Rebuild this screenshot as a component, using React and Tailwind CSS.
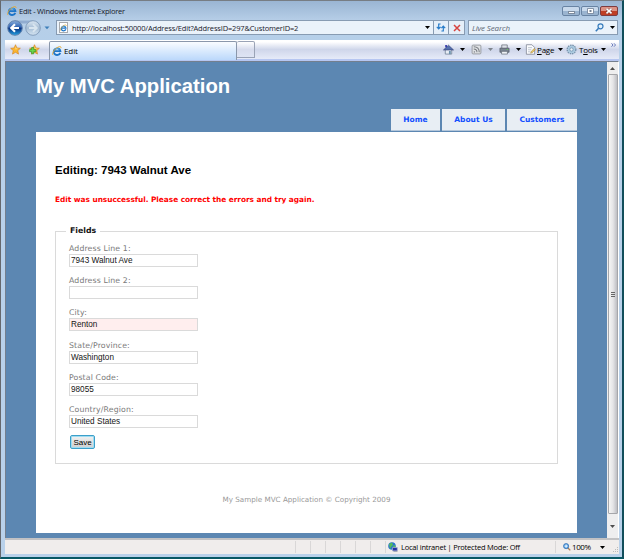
import React from "react";

const ui = "font-['Open_Sans','Noto_Sans',sans-serif]";
const arial = "font-['Liberation_Sans',Arial,sans-serif]";
const verdana = "font-['DejaVu_Sans',Verdana,sans-serif]";

function IeLogo({ className }) {
  return (
    <svg viewBox="0 0 12 12" className={className} fill="none">
      <path d="M9.9 8.2A4 4 0 1 1 10.1 6.2H3.2" stroke="#1d75c9" strokeWidth="2.2" />
      <path d="M9 4.4A3.4 3.4 0 0 0 3.4 4.2" stroke="#62bdf3" strokeWidth="0.9" />
      <path d="M1.3 10.9C-.6 9.2 3.1 3.2 7.3 1.3c2.6-1.2 4-.7 3.3 1.3" stroke="#e9a92b" strokeWidth="1.1" />
    </svg>
  );
}

function Caret({ className = "text-black" }) {
  return (
    <svg viewBox="0 0 5 3" className={`h-[3px] w-[5px] shrink-0 ${className}`}>
      <path d="M0 0h5L2.5 3z" fill="currentColor" />
    </svg>
  );
}

function Star({ className, add }) {
  return (
    <svg viewBox="0 0 12 12" className={className}>
      <path d="M6 .8l1.5 3.5 3.8.4-2.8 2.5.8 3.8L6 9.1 2.7 11l.8-3.8L.7 4.7l3.8-.4z" fill="#fbb630" stroke="#d5831c" strokeWidth=".7" />
      <path d="M6 2.2l.9 2.8 2.3.2-3.2.8z" fill="#ffe38c" />
      {add && <path d="M2.9 3.8h2.3v2.3h2.3v2.3H5.2v2.3H2.9V8.4H.6V6.1h2.3z" fill="#6bd94a" stroke="#2f8f25" strokeWidth=".7" />}
    </svg>
  );
}

function TitleBar() {
  return (
    <div className="flex h-[20px] items-start bg-linear-to-b from-[#9ab5d3] to-[#b7cfe8] pl-[6px]">
      <IeLogo className="mt-[5px] h-[10px] w-[10px]" />
      <span className={`${ui} ml-[2px] mt-[4px] whitespace-nowrap text-[7.5px] leading-[12px] tracking-[-0.22px] text-[#18202c]`}>Edit - Windows Internet Explorer</span>
      <div className="ml-auto mr-[4px] mt-[5px] flex gap-px">
        <div className="flex h-[10px] w-[18px] items-center justify-center rounded-[2px] border border-[#6883a3] bg-linear-to-b from-[#c8d9ec] from-50% to-[#9ab4d0] to-50%">
          <span className="mt-[2px] h-[3px] w-[7px] border border-[#7d8b9d] bg-white" />
        </div>
        <div className="flex h-[10px] w-[18px] items-center justify-center rounded-[2px] border border-[#6883a3] bg-linear-to-b from-[#c8d9ec] from-50% to-[#9ab4d0] to-50%">
          <svg viewBox="0 0 7 6" className="h-[6px] w-[7px]">
            <path d="M.5.5h6v5h-6z" fill="#fff" stroke="#6e7f95" strokeWidth=".8" />
            <path d="M2.5 2.2h2v1.6h-2z" fill="#53647c" />
          </svg>
        </div>
        <div className="flex h-[10px] w-[18px] items-center justify-center rounded-[2px] border border-[#7e3c40] bg-linear-to-b from-[#dc9285] from-50% to-[#bf3e25] to-50%">
          <svg viewBox="0 0 8 6" className="h-[6px] w-[8px]">
            <path d="M1.5.7l5 4.6m0-4.6l-5 4.6" stroke="#783d3d" strokeWidth="2.6" />
            <path d="M1.5.7l5 4.6m0-4.6l-5 4.6" stroke="#fff" strokeWidth="1.6" />
          </svg>
        </div>
      </div>
    </div>
  );
}

function AddressRow() {
  return (
    <div className="flex h-[20px] items-start bg-linear-to-b from-[#b7cfe8] to-[#b5cfe9] pl-[6px]">
      <svg viewBox="0 0 44 18" className="h-[18px] w-[44px] shrink-0">
        <defs>
          <linearGradient id="back" x2="0" y2="1">
            <stop stopColor="#8aaedb" />
            <stop offset=".45" stopColor="#2d62b2" />
            <stop offset=".5" stopColor="#082c7b" />
            <stop offset="1" stopColor="#22a3e4" />
          </linearGradient>
          <linearGradient id="fwd" x2="0" y2="1">
            <stop stopColor="#dce7f2" />
            <stop offset=".5" stopColor="#a5bdd5" />
            <stop offset="1" stopColor="#d4e4f2" />
          </linearGradient>
        </defs>
        <path d="M8 .5h18v3H8z" fill="#91acd0" />
        <circle cx="8" cy="8" r="7.3" fill="url(#back)" stroke="#6383ad" />
        <path d="M12 8H4.5M8 4.2L4.2 8 8 11.8" fill="none" stroke="#fff" strokeWidth="2.1" />
        <circle cx="26" cy="8" r="7.3" fill="url(#fwd)" stroke="#859fbd" />
        <path d="M22 8h7.5M26 4.2L29.8 8 26 11.8" fill="none" stroke="#d9e5ef" strokeWidth="1.8" />
        <path d="M37.5 6.5h5L40 9.3z" fill="#3d7fb9" />
      </svg>
      <div className="ml-[5px] flex h-[15px] w-[378px] items-center border border-[#879bb2] bg-[#eaf2fa] pl-[2px]">
        <div className="flex h-[11px] w-[9px] items-center border border-[#a7aaae] bg-white">
          <IeLogo className="h-[8px] w-[8px]" />
        </div>
        <span className={`${ui} ml-[4px] whitespace-nowrap text-[7.5px] leading-[12px] tracking-[-0.16px] text-[#18202c]`}>http://localhost:50000/Address/Edit?AddressID=297&amp;CustomerID=2</span>
        <div className="ml-auto mr-[3px] flex"><Caret /></div>
      </div>
      <div className="-ml-px flex h-[15px] w-[16px] items-center justify-center border border-[#879bb2] bg-[#e5eff9]">
        <svg viewBox="0 0 10 9" className="h-[9px] w-[10px]" fill="none" stroke="#287cc9" strokeWidth="1.2">
          <path d="M4.6 1H2.7v4.6M.8 3.8l1.9 2 1.9-2M5.4 8h1.9V3.4M5.4 5.2l1.9-2 1.9 2" />
        </svg>
      </div>
      <div className="-ml-px flex h-[15px] w-[17px] items-center justify-center border border-[#879bb2] bg-[#e5eff9]">
        <svg viewBox="0 0 8 8" className="h-[8px] w-[8px]"><path d="M1 1l6 6m0-6L1 7" stroke="#d7433f" strokeWidth="1.5" /></svg>
      </div>
      <div className="ml-[3px] flex h-[15px] w-[150px] items-center border border-[#879bb2] bg-[#eaf2fa] pl-[3px]">
        <span className={`${ui} text-[8px] italic leading-[12px] tracking-[-0.15px] text-[#5b6573]`}>Live Search</span>
        <svg viewBox="0 0 9 9" className="ml-auto h-[9px] w-[9px]" fill="none">
          <circle cx="5.5" cy="3.3" r="2.5" fill="#e2f0fb" stroke="#367abb" strokeWidth="1.2" />
          <path d="M3.6 5.2L.8 8.2" stroke="#367abb" strokeWidth="1.6" />
        </svg>
        <div className="ml-[6px] mr-[2px] flex"><Caret /></div>
      </div>
    </div>
  );
}

function CommandIcon({ children }) {
  return <svg viewBox="0 0 12 12" className="h-[11px] w-[11px] shrink-0">{children}</svg>;
}

function TabRow() {
  return (
    <div className="flex h-[21px] items-end border-b-2 border-[#b6c6f1] bg-linear-to-b from-[#ffffff] from-10% via-[#cfd6ea] via-50% to-[#e6ebf8]">
      <div className="flex h-[19px] w-[44px] items-center pl-[5px]">
        <Star className="h-[11px] w-[11px]" />
        <Star className="ml-[8px] h-[11px] w-[11px]" add />
      </div>
      <div className="-mb-px flex h-[19px] w-[188px] items-center rounded-t-[2px] border border-b-0 border-[#8a97ab] bg-linear-to-b from-[#f9fcff] to-[#bbd8fb] pl-[2px]">
        <IeLogo className="h-[10px] w-[10px]" />
        <span className={`${ui} ml-[2px] text-[8px] leading-[12px] tracking-[-0.1px] text-black`}>Edit</span>
      </div>
      <div className="mb-px h-[17px] w-[18px] rounded-t-[2px] border border-l-0 border-[#9aa3b6] bg-linear-to-b from-white via-[#d7dced] to-[#dee4f4]" />
      <div className="ml-auto flex h-[19px] items-center pr-[3px]">
        <CommandIcon>
          <path d="M2.5 6h7v5h-7z" fill="#e7edf5" stroke="#68788f" strokeWidth=".8" />
          <path d="M.5 6.5L6 1.3l5.5 5.2z" fill="#5470ae" stroke="#343f77" strokeWidth=".7" />
          <path d="M2.5 1h1.7v2.5H2.5z" fill="#2429a4" />
          <path d="M6.5 7.5h2V11h-2z" fill="#6b91ad" />
        </CommandIcon>
        <div className="ml-[6px] flex"><Caret /></div>
        <div className="ml-[6px] flex">
          <CommandIcon>
            <rect x="1.2" y="1.2" width="9.6" height="9.6" rx="1" fill="#e0e2e5" stroke="#8d9197" strokeWidth=".9" />
            <g fill="none" stroke="#777b80" strokeWidth="1.1"><path d="M3 3c4 0 6 2 6 6M3 5.5c2.2 0 3.5 1.4 3.5 3.5" /></g>
            <circle cx="3.7" cy="8.6" r=".8" fill="#777b80" />
          </CommandIcon>
        </div>
        <div className="ml-[6px] flex"><Caret className="text-[#7f858d]" /></div>
        <div className="ml-[6px] flex">
          <CommandIcon>
            <path d="M3 1h6v4H3z" fill="#dde1e8" stroke="#555d68" strokeWidth=".7" />
            <path d="M1 4.5h10V9H1z" fill="#7b8591" stroke="#4c535e" strokeWidth=".7" />
            <path d="M2.8 8h6.4v3H2.8z" fill="#eef1f5" stroke="#59616c" strokeWidth=".7" />
            <path d="M8.5 5.5h1.4v1H8.5z" fill="#67ce5b" />
          </CommandIcon>
        </div>
        <div className="ml-[6px] flex"><Caret /></div>
        <div className="ml-[4px] flex">
          <CommandIcon>
            <path d="M1.5.8h6l3 3v7.4h-9z" fill="#fafbfd" stroke="#858b99" strokeWidth=".9" />
            <path d="M3.3 4h4.4M3.3 6.3h3.5M3.3 8.5h2.5" stroke="#a9b2c0" strokeWidth=".8" />
            <path d="M6 10l1-2.2L10 5l1.3 1.2L8.2 9.4z" fill="#eac661" stroke="#967c3d" strokeWidth=".5" />
          </CommandIcon>
        </div>
        <span className={`${ui} ml-[1px] w-[18px] text-[8px] leading-[12px] tracking-[-0.2px] text-black`}><u>P</u>age</span>
        <div className="ml-[3px] flex"><Caret /></div>
        <div className="ml-[3px] flex">
          <CommandIcon>
            <circle cx="6" cy="6" r="4.7" fill="#b7d0e3" stroke="#7893ad" strokeWidth="1.5" strokeDasharray="1.6 .9" />
            <circle cx="6" cy="6" r="3.9" fill="#a9c9df" />
            <circle cx="6" cy="6" r="1.8" fill="#edf4fa" stroke="#6b8ca8" strokeWidth=".8" />
          </CommandIcon>
        </div>
        <span className={`${ui} ml-[2px] w-[19px] text-[8px] leading-[12px] tracking-[-0.25px] text-black`}>T<u>o</u>ols</span>
        <div className="ml-[3px] flex"><Caret /></div>
        <svg viewBox="0 0 5 4" className="mb-[10px] ml-[5px] h-[4px] w-[5px]" fill="none" stroke="#445baa" strokeWidth=".8"><path d="M.5.3L2 2 .5 3.7M3 .3L4.5 2 3 3.7" /></svg>
      </div>
    </div>
  );
}

const fields = [
  ["Address Line 1:", "7943 Walnut Ave"],
  ["Address Line 2:", ""],
  ["City:", "Renton", true],
  ["State/Province:", "Washington"],
  ["Postal Code:", "98055"],
  ["Country/Region:", "United States"],
];

function Field({ label, value, invalid }) {
  return (
    <div className="h-[32.2px]">
      <div className={`${verdana} h-[12px] text-[7.8px] leading-[13.6px] tracking-[0.12px] text-[#7a7a7a]`}>{label}</div>
      <div className={`${arial} h-[13px] w-[129px] border border-[#dadada] pl-px text-[8.2px] leading-[12px] text-[#151515] ${invalid ? "bg-[#ffeeee]" : "bg-white"}`}>{value}</div>
    </div>
  );
}

function MenuTab({ children, width }) {
  return (
    <div className={`${verdana} ${width} flex h-[22px] items-center justify-center border-b border-[#b3c6da] bg-[#e8eef4] text-[7.5px] font-bold text-[#134fff]`}>
      {children}
    </div>
  );
}

function Page() {
  return (
    <div className="flex min-w-0 flex-1 flex-col bg-[#5c87b2] pl-[30px] pr-[30px]">
      <h1 className={`${arial} h-[47px] pt-[12px] text-[20.3px] font-bold leading-[24px] text-white`}>My MVC Application</h1>
      <div className="flex h-[23px] justify-end gap-[2px]">
        <MenuTab width="w-[49px]">Home</MenuTab>
        <MenuTab width="w-[63px]">About Us</MenuTab>
        <MenuTab width="w-[70px]">Customers</MenuTab>
      </div>
      <div className="flex h-[401px] flex-col bg-white px-[19px]">
        <h2 className={`${arial} mt-[31px] h-[14px] text-[11.5px] font-bold leading-[14px] text-black`}>Editing: 7943 Walnut Ave</h2>
        <p className={`${verdana} mt-[16px] h-[12px] whitespace-nowrap text-[7.4px] font-bold leading-[14px] tracking-[-0.04px] text-[#ff0000]`}>Edit was unsuccessful. Please correct the errors and try again.</p>
        <fieldset className="mt-[20px] h-[239px] w-[503px] border border-[#dadada] px-[13px]">
          <legend className={`${verdana} -ml-[3px] h-[12px] px-[4px] text-[7.8px] font-bold leading-[12px] text-[#151515]`}>Fields</legend>
          <div className="pt-[5px]">
            {fields.map(([label, value, invalid]) => (
              <Field key={label} label={label} value={value} invalid={invalid} />
            ))}
          </div>
          <button className={`${arial} ml-px block h-[14px] w-[25px] rounded-[2px] border border-[#3c9fc9] bg-linear-to-b from-[#f2f2f2] to-[#cfcfcf] text-[8px] leading-[11px] text-black shadow-[inset_0_0_0_1px_#9fdcf2]`}>Save</button>
        </fieldset>
        <p className={`${verdana} mt-[29px] text-center text-[7.2px] leading-[13px] text-[#999999]`}>My Sample MVC Application © Copyright 2009</p>
      </div>
    </div>
  );
}

function Scrollbar() {
  return (
    <div className="flex w-[11px] flex-col items-center bg-[#eeeeef]">
      <div className="flex h-[12px] items-center">
        <svg viewBox="0 0 5 3" className="h-[3px] w-[5px]"><path d="M0 3h5L2.5 0z" fill="#4d4d4d" /></svg>
      </div>
      <div className="flex h-[440px] w-[10px] flex-col items-center justify-center gap-px rounded-[1px] border border-[#a5a6aa] bg-linear-to-r from-[#f5f5f5] via-[#e5e5e7] to-[#bdbec3]">
        <span className="h-px w-[4px] bg-[#666]" />
        <span className="h-px w-[4px] bg-[#666]" />
        <span className="h-px w-[4px] bg-[#666]" />
      </div>
      <div className="flex flex-1 items-center"><Caret className="text-[#4d4d4d]" /></div>
    </div>
  );
}

function StatusBar() {
  return (
    <div className="flex h-[16px] items-center border-t-2 border-[#c2c2c4] bg-[#f0edec]">
      <div className="ml-[290px] flex h-[12px] w-[91px] justify-between">
        {[0, 1, 2, 3, 4, 5, 6].map((n) => (
          <span key={n} className="w-px bg-[#d9d7d7]" />
        ))}
      </div>
      <svg viewBox="0 0 10 10" className="ml-[2px] h-[10px] w-[10px] shrink-0">
        <circle cx="4" cy="4" r="3.8" fill="#2c77cd" />
        <path d="M1 2l3-1.5L5 3 3 5 2 7zM5 4l2-1 .5 2L6 7z" fill="#55bd5b" />
        <path d="M4.5 5.5h4.8v3.4H4.5z" fill="#2533a7" stroke="#a7b3cb" strokeWidth=".7" />
        <path d="M5.5 9.7h4" stroke="#7b8799" strokeWidth=".7" />
      </svg>
      <span className={`${ui} ml-[3px] whitespace-nowrap text-[7.5px] leading-[12px] tracking-[-0.22px] text-black`}>Local intranet | Protected Mode: Off</span>
      <div className="ml-auto flex h-[12px] w-[64px] items-center border-l border-[#d9d7d7] pl-[7px]">
        <svg viewBox="0 0 9 9" className="h-[8px] w-[8px] shrink-0" fill="none">
          <path d="M5.3 5.3l2.9 3" stroke="#a87d56" strokeWidth="1.5" />
          <circle cx="3.5" cy="3.5" r="2.9" fill="#5ba6e8" stroke="#2d67aa" strokeWidth=".8" />
          <path d="M3.5 1.8v3.4M1.8 3.5h3.4" stroke="#fff" strokeWidth="1" />
        </svg>
        <span className={`${ui} ml-px w-[18px] whitespace-nowrap text-[8px] leading-[12px] tracking-[-0.4px] text-black`}>100%</span>
        <div className="ml-[10px] flex"><Caret /></div>
        <svg viewBox="0 0 6 6" className="ml-auto mt-[6px] h-[6px] w-[6px]" fill="#bbb"><path d="M4 0h1v1H4zM2 2h1v1H2zM4 2h1v1H4zM0 4h1v1H0zM2 4h1v1H2zM4 4h1v1H4z" /></svg>
      </div>
    </div>
  );
}

export default function App() {
  return (
    <div className="h-[559px] w-[624px] overflow-hidden border-t border-r-2 border-b-2 border-l border-t-[#777d84] border-r-[#114e5b] border-b-[#075865] border-l-[#65686d] bg-[#b9d1ea]">
      <div className="flex h-[556px] flex-col">
        <div className="bg-[#b5cfe9]">
          <TitleBar />
          <div className="-mt-px"><AddressRow /></div>
        </div>
        <div className="mr-[3px] ml-[4px]">
          <TabRow />
        </div>
        <div className="ml-[4px] mr-[3px] flex h-[477px] border-t border-l border-r border-[#747f8e] border-r-white">
          <Page />
          <Scrollbar />
        </div>
        <div className="ml-[4px] mr-[3px]"><StatusBar /></div>
      </div>
    </div>
  );
}
